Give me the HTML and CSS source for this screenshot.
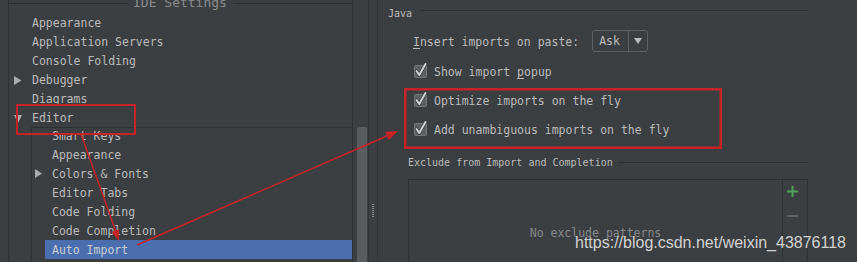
FILE: index.html
```html
<!DOCTYPE html>
<html>
<head>
<meta charset="utf-8">
<link rel="stylesheet" href="styles.css">
</head>
<body>
<div class="window">
  <div class="left">
    <div class="frame">
      <div class="frame-title"><span class="rule short"></span><span class="ttl">IDE Settings</span><span class="rule"></span></div>
      <ul class="tree">
        <li class="node"><span class="tw"></span><span>Appearance</span></li>
        <li class="node"><span class="tw"></span><span>Application Servers</span></li>
        <li class="node"><span class="tw"></span><span>Console Folding</span></li>
        <li class="node"><span class="tw"><svg class="tri" width="8" height="9" viewBox="0 0 8 9"><path d="M0 0 L7.5 4.5 L0 9 Z"/></svg></span><span>Debugger</span></li>
        <li class="node"><span class="tw"></span><span>Diagrams</span></li>
        <li class="node"><span class="tw"><svg class="tri" width="8" height="8" viewBox="0 0 8 8"><path d="M0 0 L8 0 L4 8 Z"/></svg></span><span>Editor</span></li>
      </ul>
      <div class="subpanel">
        <ul class="sub">
          <li class="sub-node"><span class="tw2"></span><span class="lbl">Smart Keys</span></li>
          <li class="sub-node"><span class="tw2"></span><span class="lbl">Appearance</span></li>
          <li class="sub-node"><span class="tw2"><svg class="tri" width="7" height="9" viewBox="0 0 7 9"><path d="M0 0 L7 4.5 L0 9 Z"/></svg></span><span class="lbl">Colors &amp; Fonts</span></li>
          <li class="sub-node"><span class="tw2"></span><span class="lbl">Editor Tabs</span></li>
          <li class="sub-node"><span class="tw2"></span><span class="lbl">Code Folding</span></li>
          <li class="sub-node"><span class="tw2"></span><span class="lbl">Code Completion</span></li>
          <li class="sub-node selected"><span class="tw2"></span><span class="lbl">Auto Import</span></li>
        </ul>
      </div>
    </div>
    <div class="gutter"><div class="scrollbar"></div></div>
  </div>
  <div class="splitter"><div class="grip"></div></div>
  <div class="right">
    <div class="group-title"><span class="gt-text">Java</span><span class="gt-rule"></span></div>
    <div class="group-body">
      <div class="insert-row">
        <span class="label"><u>I</u>nsert imports on paste:</span>
        <div class="combo"><span class="combo-val">Ask</span><span class="combo-btn"><svg width="8" height="6" viewBox="0 0 8 6"><path d="M0 0 L8 0 L4 6 Z"/></svg></span></div>
      </div>
      <div class="check-row">
        <svg class="cb" width="13" height="13" viewBox="0 0 13 13"><rect x="0.5" y="0.5" width="12" height="12" rx="1"/><path class="ck-shadow" d="M2.5 6 L5.2 10 L11.5 -1"/><path class="ck" d="M2.5 6 L5.2 10 L11.5 -1"/></svg>
        <span class="label">Show import <u>p</u>opup</span>
      </div>
      <div class="check-row">
        <svg class="cb" width="13" height="13" viewBox="0 0 13 13"><rect x="0.5" y="0.5" width="12" height="12" rx="1"/><path class="ck-shadow" d="M2.5 6 L5.2 10 L11.5 -1"/><path class="ck" d="M2.5 6 L5.2 10 L11.5 -1"/></svg>
        <span class="label">Optimize imports on the fly</span>
      </div>
      <div class="check-row">
        <svg class="cb" width="13" height="13" viewBox="0 0 13 13"><rect x="0.5" y="0.5" width="12" height="12" rx="1"/><path class="ck-shadow" d="M2.5 6 L5.2 10 L11.5 -1"/><path class="ck" d="M2.5 6 L5.2 10 L11.5 -1"/></svg>
        <span class="label">Add unambiguous imports on the fly</span>
      </div>
      <div class="sub-title"><span class="st-text">Exclude from Import and Completion</span><span class="st-rule"></span></div>
      <div class="table">
        <div class="table-list"><span class="empty">No exclude patterns</span></div>
        <div class="table-tools">
          <svg class="plus" width="11" height="11" viewBox="0 0 11 11"><path d="M4.5 0 H6.5 V4.5 H11 V6.5 H6.5 V11 H4.5 V6.5 H0 V4.5 H4.5 Z"/></svg>
          <div class="minus"></div>
        </div>
      </div>
    </div>
  </div>

  <svg class="annotations" width="857" height="262" viewBox="0 0 857 262">
    <rect x="17" y="105" width="118" height="29" fill="none" stroke="#c9232a" stroke-width="2"/>
    <rect x="405.25" y="89.25" width="315.5" height="58.5" fill="none" stroke="#c9232a" stroke-width="2.5"/>
    <line x1="81" y1="134" x2="116" y2="232" stroke="#c9232a" stroke-width="1.5"/>
    <polygon points="119,241 111.5,232 119.1,229.3" fill="#c9232a"/>
    <line x1="137" y1="245" x2="388" y2="135.5" stroke="#c9232a" stroke-width="1.5"/>
    <polygon points="398,131 388.8,139.9 385.2,131.7" fill="#c9232a"/>
  </svg>
  <div class="watermark">https://blog.csdn.net/weixin_43876118</div>
</div>
</body>
</html>
```

FILE: styles.css
```css
* { box-sizing: border-box; }
html, body { margin: 0; padding: 0; }
body {
  background: #3c3f41;
  color: #bbbbbb;
  font-family: "DejaVu Sans Mono", "Liberation Mono", monospace;
  font-size: 11.5px;
}
.window {
  position: relative;
  width: 857px;
  height: 262px;
  overflow: hidden;
  display: flex;
  background: #3c3f41;
}
ul { list-style: none; margin: 0; padding: 0; }

/* left column */
.left {
  width: 369px;
  flex: none;
  display: flex;
  padding-left: 8px;
  border-right: 1px solid #313335;
}
.frame {
  width: 345px;
  flex: none;
  border-left: 1px solid #2e3032;
  border-right: 1px solid #2e3032;
  display: flex;
  flex-direction: column;
}
.frame-title {
  display: flex;
  align-items: center;
  height: 6px;
}
.rule { height: 1px; background: #2e3032; flex: 1; }
.rule.short { flex: none; width: 119px; }
.ttl {
  font-size: 13px;
  line-height: 6px;
  color: #8a8c8e;
  padding: 0 6px 0 5px;
  white-space: nowrap;
}
.tree { padding-top: 8px; }
.node {
  display: flex;
  align-items: center;
  height: 19px;
  line-height: 19px;
  padding-left: 5px;
  white-space: nowrap;
}
.tw {
  width: 18px;
  flex: none;
  display: flex;
  align-items: center;
}
.tri { fill: #a9abad; display: block; }

.subpanel {
  margin-left: 22px;
  margin-top: -1px;
  border-top: 1px solid #2e3032;
  border-left: 1px solid #2e3032;
  flex: 1;
  overflow: hidden;
}
.sub { margin-top: -2px; }
.sub-node {
  display: flex;
  height: 19px;
  white-space: nowrap;
}
.tw2 {
  width: 13px;
  flex: none;
  padding-left: 3px;
  display: flex;
  align-items: center;
}
.lbl { flex: 1; padding-left: 7px; padding-top: 1px; line-height: 19px; }
.sub-node.selected .lbl { background: #4b6eaf; color: #c8cdd6; }

.gutter { width: 15px; flex: none; padding-left: 4px; }
.scrollbar {
  margin-top: 127px;
  width: 10px;
  height: 140px;
  background: #5a5d5f;
  border-radius: 2px;
}

.splitter { width: 8px; flex: none; padding-left: 3px; }
.grip {
  margin-top: 204px;
  width: 2px;
  height: 14px;
  background: repeating-linear-gradient(to bottom, #8a8c8e 0 1px, transparent 1px 2px);
}

/* right column */
.right {
  flex: 1;
  border-left: 1px solid #313335;
  padding-left: 10px;
  padding-right: 52px;
}
.group-title {
  display: flex;
  margin-top: 4px;
  height: 20px;
}
.gt-text { font-size: 10px; line-height: 20px; color: #bbbbbb; }
.gt-rule {
  flex: 1;
  height: 1px;
  margin: 6px 0 0 8px;
  background: #2e3032;
}
.group-body { padding-left: 20px; }
.insert-row {
  display: flex;
  align-items: center;
  margin-top: 6px;
  height: 22px;
  padding-left: 5px;
  white-space: nowrap;
}
.insert-row .label { padding-top: 1px; }
u { text-decoration: underline; text-underline-offset: 2px; }
.combo {
  margin-left: 13px;
  display: flex;
  height: 22px;
  width: 56px;
  border: 1px solid #5e6164;
  border-radius: 3px;
}
.combo-val {
  width: 36px;
  padding-left: 6px;
  line-height: 21px;
  border-right: 1px solid #5e6164;
}
.combo-btn {
  flex: 1;
  display: flex;
  align-items: center;
  justify-content: center;
}
.combo-btn svg { fill: #bbbbbb; display: block; }

.check-row {
  display: flex;
  align-items: center;
  height: 29px;
  padding-left: 6px;
  white-space: nowrap;
}
.check-row .label { padding-top: 1px; }
.insert-row + .check-row { margin-top: 5px; }
.cb { flex: none; overflow: visible; margin-right: 7px; }
.cb rect { fill: #5e6163; stroke: #76797c; stroke-width: 1; }
.ck-shadow { fill: none; stroke: #3a3c3e; stroke-width: 3.4; stroke-linecap: round; stroke-linejoin: round; }
.ck { fill: none; stroke: #d2d2d2; stroke-width: 2; stroke-linecap: round; stroke-linejoin: round; }

.sub-title {
  display: flex;
  margin-top: 9px;
  height: 20px;
}
.st-text { font-size: 10px; line-height: 20px; white-space: nowrap; }
.st-rule {
  flex: 1;
  height: 1px;
  margin: 9px 0 0 5px;
  background: #2e3032;
}
.table {
  margin-top: 6px;
  width: 400px;
  height: 100px;
  border: 1px solid #2e3032;
  display: flex;
}
.table-list {
  flex: 1;
  display: flex;
  justify-content: center;
  align-items: flex-start;
}
.empty {
  margin-top: 46px;
  line-height: 14px;
  color: #86888a;
}
.table-tools {
  width: 25px;
  flex: none;
  border-left: 1px solid #2e3032;
  padding: 6px 0 0 4px;
}
.plus { display: block; fill: #4fa35b; }
.minus {
  margin-top: 18px;
  width: 11px;
  height: 2px;
  background: #5e6164;
}

/* overlays */
.annotations {
  position: absolute;
  left: 0;
  top: 0;
  pointer-events: none;
}
.watermark {
  position: absolute;
  left: 575px;
  top: 234px;
  font-family: "Liberation Sans", Arial, sans-serif;
  font-size: 16px;
  line-height: 18px;
  color: rgba(232, 232, 232, 0.88);
  white-space: nowrap;
}
```
